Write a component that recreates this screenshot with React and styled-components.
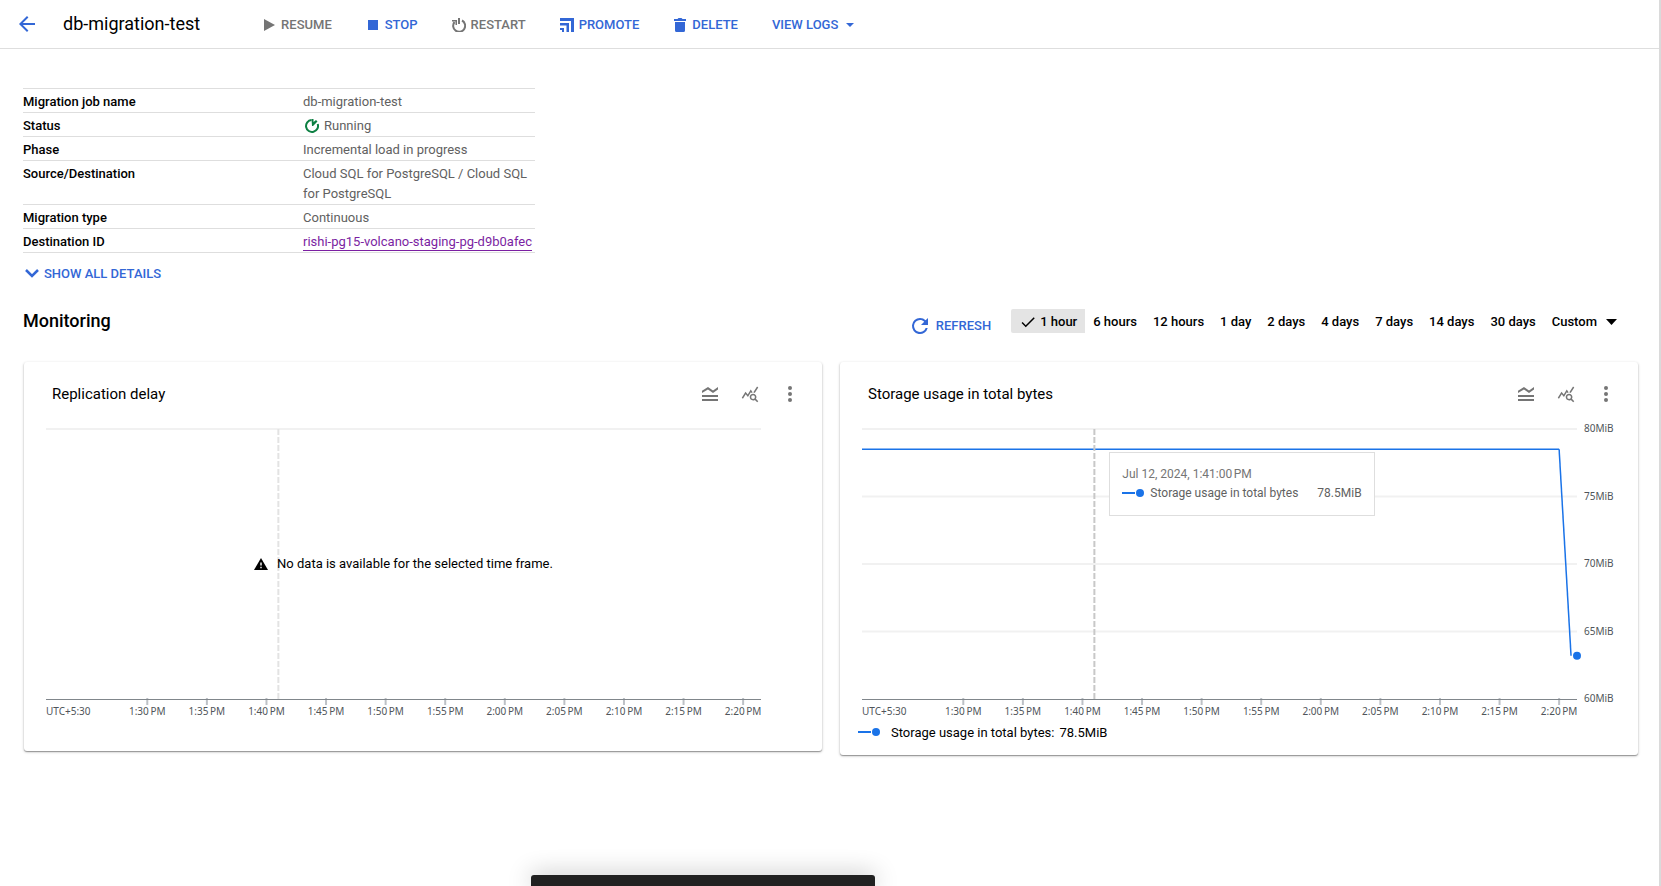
import React from "react";
import styled, { createGlobalStyle } from "styled-components";

const BLUE = "#3367d6";
const SERIES = "#1a73e8";

const GlobalStyle = createGlobalStyle`
  *, *::before, *::after { box-sizing: border-box; }
  body {
    margin: 0;
    background: #fff;
    color: #000;
    font-family: Roboto, "Noto Sans", sans-serif;
    font-size: 13px;
    line-height: 20px;
  }
  button {
    margin: 0;
    padding: 0;
    border: 0;
    background: none;
    color: inherit;
    font: inherit;
    cursor: pointer;
  }
  svg { display: block; flex: none; }
`;

const Page = styled.div`
  min-height: 100vh;
  border-right: 2px solid #dadada;
`;

/* ---------- top bar ---------- */

const TopBar = styled.header`
  display: flex;
  align-items: center;
  height: 49px;
  padding-left: 15px;
  border-bottom: 1px solid #dedede;
`;

const BackButton = styled.button`
  color: ${BLUE};
`;

const PageTitle = styled.h1`
  margin: 0 54px 0 24px;
  font-size: 18px;
  font-weight: 400;
  line-height: 24px;
`;

const Actions = styled.div`
  display: flex;
  gap: 18px;
`;

const Action = styled.button`
  && {
    display: flex;
    align-items: center;
    gap: 5px;
    padding: 1px 8px 0;
    font-weight: 500;
    line-height: 25px;
    text-transform: uppercase;
    color: ${(p) => (p.disabled ? "#757575" : BLUE)};
  }
`;

/* ---------- job details ---------- */

const Details = styled.section`
  padding: 39px 21px 0 23px;
`;

const InfoTable = styled.table`
  width: 512px;
  max-width: 100%;
  table-layout: fixed;
  border-collapse: separate;
  border-spacing: 0;
  border-top: 1px solid #dedede;

  th, td {
    padding: 3px 0 0;
    border-bottom: 1px solid #dedede;
    vertical-align: top;
    text-align: left;
  }
  th {
    width: 280px;
    font-weight: 500;
  }
  td { color: #616161; }
`;

const Status = styled.span`
  display: flex;
  align-items: center;
  gap: 5px;
  padding-left: 2px;
`;

const ResourceLink = styled.a`
  display: inline-block;
  height: 19px;
  border-bottom: 1px solid #7b1fa2;
  color: #7b1fa2;
  text-decoration: none;
  vertical-align: top;
`;

const ShowAll = styled.button`
  && {
    display: flex;
    align-items: center;
    gap: 4px;
    margin-top: 9px;
    font-weight: 500;
    line-height: 24px;
    text-transform: uppercase;
    color: ${BLUE};
  }
`;

/* ---------- monitoring ---------- */

const Monitoring = styled.section`
  padding: 23px 21px 40px 24px;
`;

const MonitoringBar = styled.div`
  display: flex;
  align-items: flex-start;
  margin-bottom: 24px;
`;

const SectionTitle = styled.h2`
  flex: 1;
  margin: 0 0 0 -1px;
  font-size: 18px;
  font-weight: 500;
  line-height: 24px;
`;

const Refresh = styled.button`
  && {
    display: flex;
    align-items: center;
    gap: 4px;
    margin: 5px 20px 0 0;
    font-weight: 500;
    line-height: 24px;
    text-transform: uppercase;
    color: ${BLUE};
  }
`;

const Ranges = styled.div`
  display: flex;
  padding-right: 13px;
`;

const Range = styled.button`
  && {
    display: flex;
    align-items: center;
    gap: 3px;
    height: 24px;
    padding: 1px 8px 0;
    border-radius: 2px 0 0 2px;
    background: ${(p) => (p["aria-pressed"] ? "#e4e4e4" : "none")};
    font-weight: 500;
    line-height: 23px;
    white-space: nowrap;
  }
`;

const Cards = styled.div`
  display: grid;
  grid-template-columns: repeat(2, minmax(0, 1fr));
  align-items: start;
  gap: 18px;
`;

const Card = styled.article`
  padding: 0 61px 0 22px;
  border-radius: 3px;
  background: #fff;
  box-shadow: 0 1px 1px rgba(0, 0, 0, 0.3), 0 1px 3px rgba(0, 0, 0, 0.24);
`;

const CardHead = styled.div`
  display: flex;
  align-items: center;
  gap: 16px;
  height: 63px;
  margin-right: -41px;
  padding: 1px 0 0 6px;
  color: #757575;
`;

const CardTitle = styled.h3`
  flex: 1;
  margin: 0;
  color: #000;
  font-size: 15px;
  font-weight: 400;
  line-height: 24px;
`;

const ChartArea = styled.div`
  position: relative;
`;

const Plot = styled.svg`
  width: 100%;
  height: 296px;
  overflow: visible;

  text {
    fill: #50555a;
    font-family: "Noto Sans", sans-serif;
    font-size: 10px;
  }
`;

const EmptyNote = styled.p`
  position: absolute;
  top: 129px;
  left: 0;
  right: 0;
  display: flex;
  align-items: center;
  justify-content: center;
  gap: 9px;
  margin: 0;
`;

const Tooltip = styled.div`
  position: absolute;
  top: 27px;
  left: calc(32.5% + 15px);
  height: 64px;
  padding: 12px 12px 0;
  border: 1px solid #dedede;
  background: #fff;
  color: #616161;
  font-size: 12px;
  line-height: 19px;
  white-space: nowrap;
`;

const TooltipTime = styled.div`
  color: #757575;
`;

const TooltipRow = styled.div`
  display: flex;
  align-items: center;
  gap: 6px;
`;

const TooltipValue = styled.span`
  margin-left: 13px;
`;

const Legend = styled.div`
  display: flex;
  align-items: center;
  gap: 11px;
  height: 24px;
  margin-left: -4px;
`;

const LegendValue = styled.span`
  margin-left: 5px;
`;

const CardFoot = styled.div`
  height: ${(p) => (p.$short ? 10 : 30)}px;
`;

const Snackbar = styled.div`
  position: fixed;
  bottom: 0;
  left: 531px;
  width: 344px;
  height: 11px;
  border-radius: 3px 3px 0 0;
  background: #212121;
  box-shadow: 0 0 24px rgba(0, 0, 0, 0.3);
`;

/* ---------- icons ---------- */

const Icon = ({ size = 24, box = size, children }) => (
  <svg width={size} height={size} viewBox={`0 0 ${box} ${box}`} fill="currentColor" aria-hidden="true">
    {children}
  </svg>
);

const BackIcon = () => (
  <Icon><path d="M20 11H7.83l5.59-5.59L12 4l-8 8 8 8 1.41-1.41L7.83 13H20v-2z" /></Icon>
);
const PlayIcon = () => <Icon size={14}><path d="M2 1v12l11-6z" /></Icon>;
const StopIcon = () => <Icon size={14}><path d="M2 2h10v10H2z" /></Icon>;
const RestartIcon = () => (
  <Icon size={14}>
    <path d="M6 0h2v6H6z" />
    <path d="M0 2h5v5H3.500V3.500H0z" />
    <path d="M2.500 4A6 6 0 1 0 10 2.500" fill="none" stroke="currentColor" strokeWidth="2" />
  </Icon>
);
const PromoteIcon = () => (
  <Icon size={14}><path d="M0 0h14v14h-3V3H0zM0 5h9v9H6.500V7.500H0zM0 10h4v4H2v-2H0z" /></Icon>
);
const DeleteIcon = () => (
  <Icon size={14}><path d="M2 4h10v8.500a1.500 1.500 0 0 1-1.500 1.500h-7A1.500 1.500 0 0 1 2 12.500zM1 1h3.500l1-1h3l1 1H13v2H1z" /></Icon>
);
const CaretIcon = () => (
  <svg width="11" height="8" viewBox="0 0 11 8" fill="currentColor" aria-hidden="true"><path d="M3 2h8L7 6z" /></svg>
);
const BigCaretIcon = () => (
  <svg width="17" height="8" viewBox="0 0 17 8" aria-hidden="true"><path d="M6 1h11l-5.500 6z" /></svg>
);
const RunningIcon = () => (
  <svg width="14" height="14" viewBox="0 0 14 14" aria-hidden="true">
    <path d="M6.500 1A6 6 0 1 0 12.700 5" fill="none" stroke="#0d8043" strokeWidth="2" />
    <path d="M6.500 0h2v3L11 1l1.500 1.500-4.500 4.500H7z" fill="#0d8043" />
  </svg>
);
const ChevronIcon = () => (
  <svg width="17" height="14" viewBox="0 0 17 14" fill="none" stroke={BLUE} strokeWidth="2.500" aria-hidden="true">
    <path d="M3 3l6 6 6-6" />
  </svg>
);
const RefreshIcon = () => (
  <Icon><path d="M17.650 6.350A7.950 7.950 0 0 0 12 4a8 8 0 1 0 7.730 10h-2.080A6 6 0 1 1 12 6c1.660 0 3.140.690 4.220 1.780L13 11h7V4z" /></Icon>
);
const CheckIcon = () => (
  <Icon size={18} box={24}><path d="M9 16.170L4.830 12l-1.420 1.410L9 19 21 7l-1.410-1.410z" /></Icon>
);
const LegendToggleIcon = () => (
  <Icon><path d="M20 13H4v2h16v-2zm0 4H4v2h16v-2zm-5-6l5-3.550V5l-5 3.550L10 5 4 8.660V11l5.920-3.610L15 11z" /></Icon>
);
const QueryStatsIcon = () => (
  <Icon size={18} box={24}><path d="M19.880 18.470c.440-.700.700-1.510.700-2.390 0-2.490-2.010-4.500-4.500-4.500s-4.500 2.010-4.500 4.500 2.010 4.500 4.490 4.500c.880 0 1.700-.260 2.390-.700L21.580 23 23 21.580l-3.120-3.110zm-3.800.110a2.500 2.500 0 1 1 0-5 2.500 2.500 0 0 1 0 5zm-.360-8.500c-.740.020-1.450.180-2.100.450l-.550-.830-3.800 6.180-3.010-3.520-3.630 5.810L1 17l5-8 3 3.500L13 6l2.720 4.080zm2.590.500c-.640-.280-1.330-.450-2.050-.490L21.380 2 23 3.180l-4.690 7.400z" /></Icon>
);
const MoreIcon = () => (
  <Icon>
    <circle cx="12" cy="6" r="2" /><circle cx="12" cy="12" r="2" /><circle cx="12" cy="18" r="2" />
  </Icon>
);
const WarningIcon = () => (
  <Icon size={14}>
    <path d="M7 1l7 12H0z" fill="#000" />
    <path d="M6.300 5.500h1.400v3H6.300zM6.300 9.800h1.400v1.400H6.300z" fill="#fff" />
  </Icon>
);
const SeriesKey = () => (
  <svg width="22" height="12" viewBox="0 0 22 12" aria-hidden="true">
    <path d="M0 5h13" stroke={SERIES} strokeWidth="2" />
    <circle cx="18" cy="5" r="4" fill={SERIES} />
  </svg>
);

/* ---------- chart ---------- */

const TOP = 4;
const BOTTOM = 274;
const NNBSP = "\u202f";

// The axis spans one hour, starting at 1:21:30 PM.
const xOf = (minute) => `${((minute - 21.5) / 60) * 100}%`;
const yOf = (mib) => BOTTOM - ((mib - 60) / 20) * (BOTTOM - TOP);

const TICKS = Array.from({ length: 11 }, (_, i) => {
  const minute = 30 + i * 5;
  const hour = 1 + Math.floor(minute / 60);
  return { minute, label: `${hour}:${String(minute % 60).padStart(2, "0")}${NNBSP}PM` };
});

const USAGE = [
  [21.5, 78.5],
  [80, 78.5],
  [81, 63.2],
];

function Chart({ data, label }) {
  const gridValues = data ? [80, 75, 70, 65] : [80];
  return (
    <Plot role="img" aria-label={label}>
      {gridValues.map((v) => (
        <line key={v} x1="0" x2="100%" y1={yOf(v)} y2={yOf(v)} stroke="#f1f1f1" strokeWidth="2" />
      ))}
      {data && [80, 75, 70, 65, 60].map((v) => (
        <text key={v} x="100%" dx="7" y={yOf(v) + 3}>{v}MiB</text>
      ))}
      {TICKS.map((t) => (
        <g key={t.minute}>
          <line x1={xOf(t.minute)} x2={xOf(t.minute)} y1={BOTTOM - 1} y2={BOTTOM + 6} stroke="#bdc1c6" strokeWidth="2" />
          <text x={xOf(t.minute)} y="290" textAnchor="middle">{t.label}</text>
        </g>
      ))}
      <text x="0" y="290">UTC+5:30</text>
      <line x1="0" x2="100%" y1={BOTTOM + 0.5} y2={BOTTOM + 0.5} stroke="#80868b" />
      {data && data.slice(1).map(([m, v], i) => (
        <line
          key={m}
          x1={xOf(data[i][0])}
          y1={yOf(data[i][1])}
          x2={xOf(m)}
          y2={yOf(v)}
          stroke={SERIES}
          strokeWidth="1.5"
        />
      ))}
      <line
        x1={xOf(41)} x2={xOf(41)} y1={TOP} y2={BOTTOM}
        stroke={data ? "#c8c8c8" : "#e3e3e3"} strokeWidth="2" strokeDasharray="6 2"
      />
      {data && <circle cx="100%" cy={yOf(63.2)} r="4" fill={SERIES} />}
    </Plot>
  );
}

const ExploreButton = styled.button`
  && {
    display: flex;
    align-items: center;
    justify-content: center;
    width: 24px;
    height: 24px;
  }
`;

function ChartCard({ title, children }) {
  return (
    <Card>
      <CardHead>
        <CardTitle>{title}</CardTitle>
        <button type="button" aria-label="Toggle legend"><LegendToggleIcon /></button>
        <ExploreButton type="button" aria-label="Explore data"><QueryStatsIcon /></ExploreButton>
        <button type="button" aria-label="More options"><MoreIcon /></button>
      </CardHead>
      {children}
    </Card>
  );
}

const RANGES = ["1 hour", "6 hours", "12 hours", "1 day", "2 days", "4 days", "7 days", "14 days", "30 days"];

export default function App() {
  return (
    <Page>
      <GlobalStyle />
      <TopBar>
        <BackButton type="button" aria-label="Back"><BackIcon /></BackButton>
        <PageTitle>db-migration-test</PageTitle>
        <Actions>
          <Action type="button" disabled><PlayIcon />Resume</Action>
          <Action type="button"><StopIcon />Stop</Action>
          <Action type="button" disabled><RestartIcon />Restart</Action>
          <Action type="button"><PromoteIcon />Promote</Action>
          <Action type="button"><DeleteIcon />Delete</Action>
          <Action type="button">View logs<CaretIcon /></Action>
        </Actions>
      </TopBar>

      <Details>
        <InfoTable>
          <tbody>
            <tr><th scope="row">Migration job name</th><td>db-migration-test</td></tr>
            <tr><th scope="row">Status</th><td><Status><RunningIcon />Running</Status></td></tr>
            <tr><th scope="row">Phase</th><td>Incremental load in progress</td></tr>
            <tr><th scope="row">Source/Destination</th><td>Cloud SQL for PostgreSQL / Cloud SQL for PostgreSQL</td></tr>
            <tr><th scope="row">Migration type</th><td>Continuous</td></tr>
            <tr>
              <th scope="row">Destination ID</th>
              <td><ResourceLink href="#destination">rishi-pg15-volcano-staging-pg-d9b0afec</ResourceLink></td>
            </tr>
          </tbody>
        </InfoTable>
        <ShowAll type="button"><ChevronIcon />Show all details</ShowAll>
      </Details>

      <Monitoring>
        <MonitoringBar>
          <SectionTitle>Monitoring</SectionTitle>
          <Refresh type="button"><RefreshIcon />Refresh</Refresh>
          <Ranges>
            {RANGES.map((r, i) => (
              <Range key={r} type="button" aria-pressed={i === 0}>
                {i === 0 && <CheckIcon />}{r}
              </Range>
            ))}
            <Range type="button">Custom<BigCaretIcon /></Range>
          </Ranges>
        </MonitoringBar>

        <Cards>
          <ChartCard title="Replication delay">
            <ChartArea>
              <Chart label="Replication delay, no data" />
              <EmptyNote><WarningIcon />No data is available for the selected time frame.</EmptyNote>
            </ChartArea>
            <CardFoot />
          </ChartCard>
          <ChartCard title="Storage usage in total bytes">
            <ChartArea>
              <Chart data={USAGE} label="Storage usage in total bytes over one hour" />
              <Tooltip>
                <TooltipTime>Jul 12, 2024, 1:41:00{NNBSP}PM</TooltipTime>
                <TooltipRow>
                  <SeriesKey />
                  Storage usage in total bytes
                  <TooltipValue>78.5MiB</TooltipValue>
                </TooltipRow>
              </Tooltip>
            </ChartArea>
            <Legend>
              <SeriesKey />
              <span>Storage usage in total bytes:<LegendValue>78.5MiB</LegendValue></span>
            </Legend>
            <CardFoot $short />
          </ChartCard>
        </Cards>
      </Monitoring>
      <Snackbar role="status" />
    </Page>
  );
}
